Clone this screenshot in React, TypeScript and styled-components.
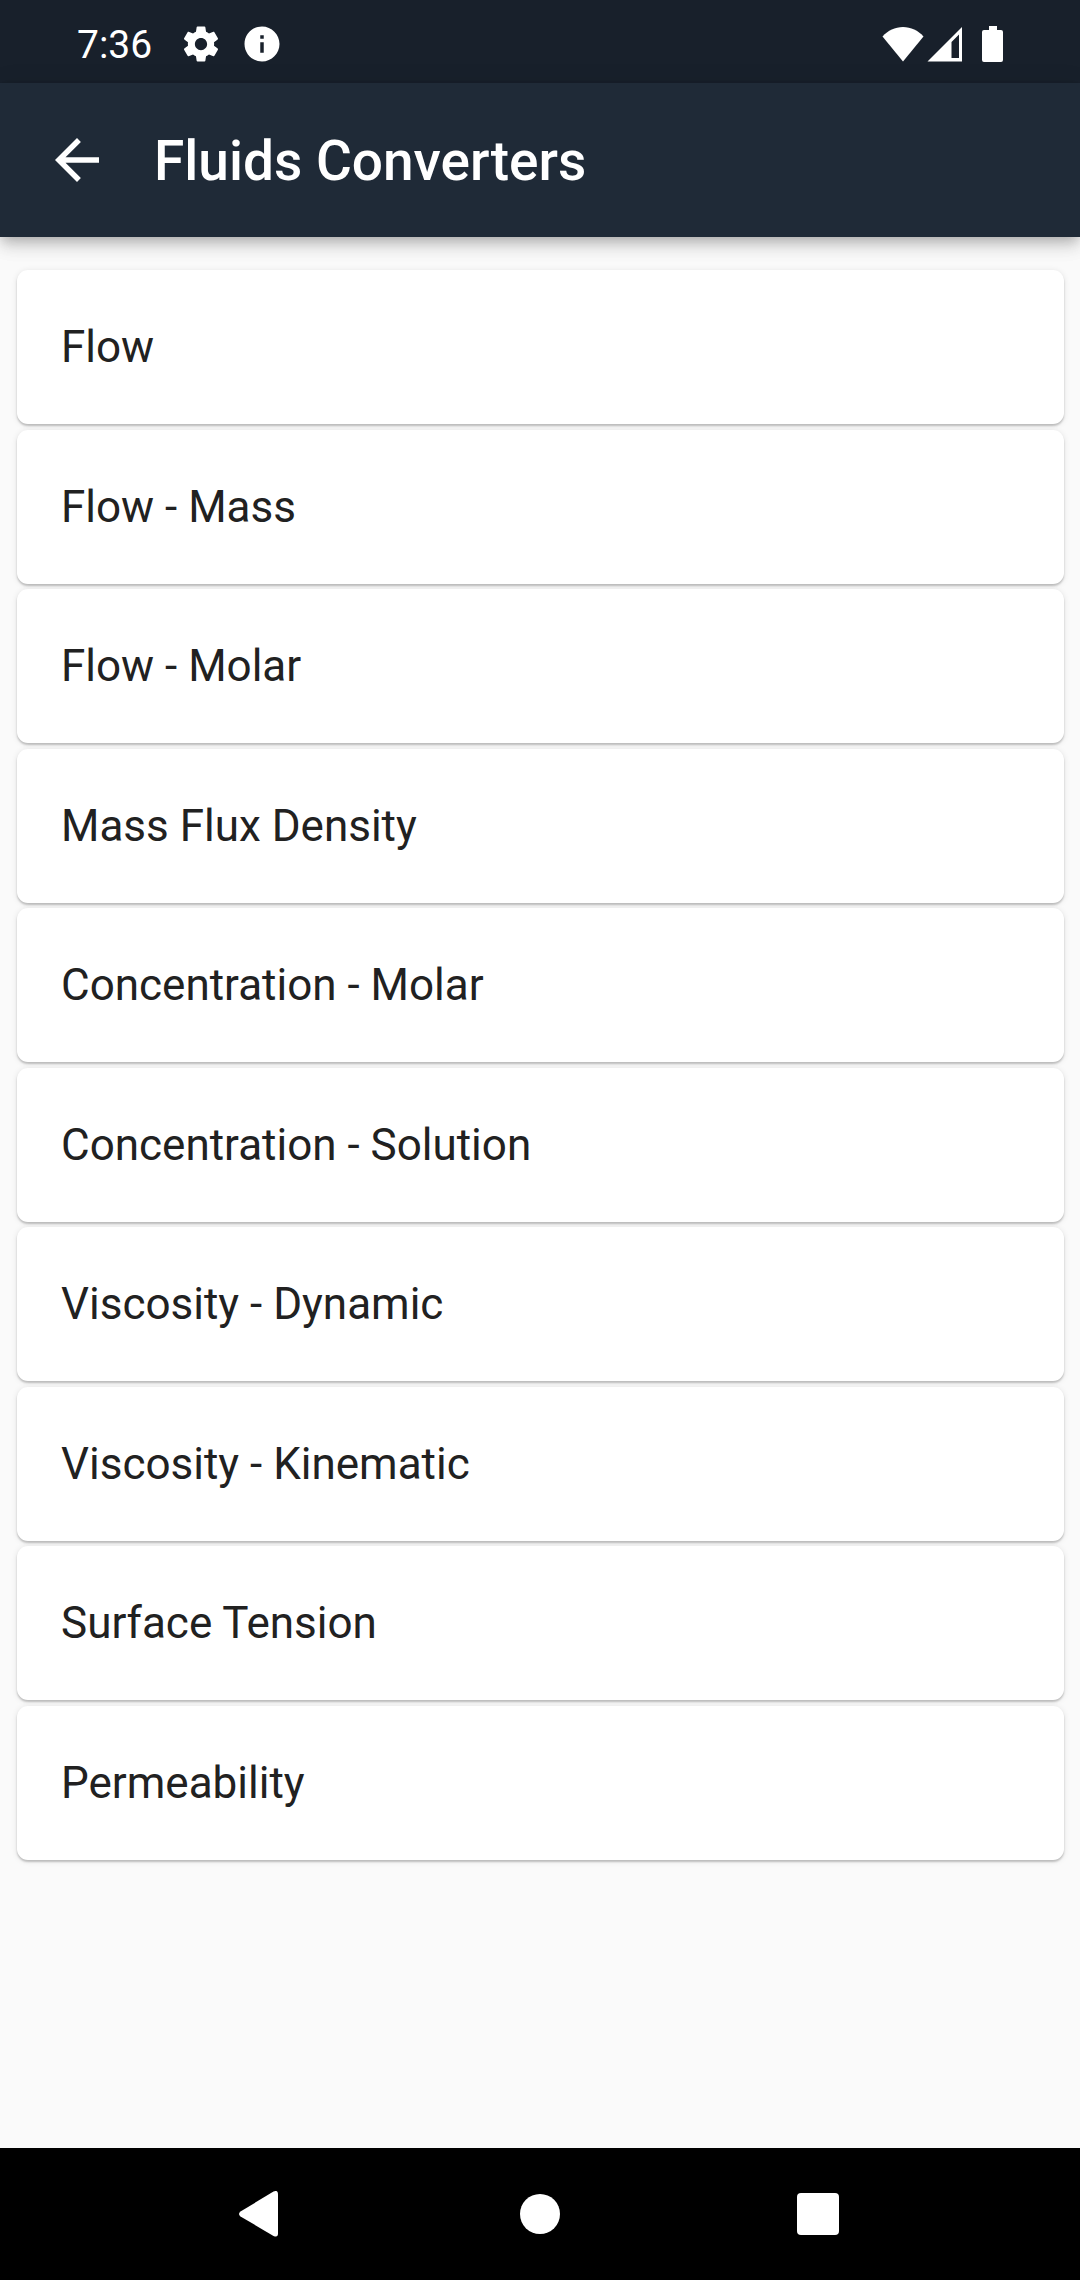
import React from "react";
import styled, { createGlobalStyle } from "styled-components";

const GlobalStyle = createGlobalStyle`
  * {
    box-sizing: border-box;
  }
  body {
    margin: 0;
    background: #fafafa;
    font-family: Roboto, "Noto Sans", sans-serif;
  }
`;

const Screen = styled.div`
  display: flex;
  flex-direction: column;
  min-height: 100vh;
  background: #fafafa;
`;

const StatusBar = styled.header`
  display: flex;
  align-items: center;
  justify-content: space-between;
  height: 83px;
  padding: 4px 76px 0 77px;
  background: #18202b;
  color: #fff;
`;

const StatusGroup = styled.div<{ $gap: number }>`
  display: flex;
  align-items: center;
  gap: ${({ $gap }) => $gap}px;
`;

const Clock = styled.time`
  margin-right: 9px;
  padding-top: 2px;
  font-size: 39px;
  line-height: 48px;
`;

const Glyph = styled.svg`
  display: block;
  flex: none;
  fill: currentColor;
`;

const AppBar = styled.div`
  display: flex;
  align-items: center;
  gap: 44px;
  height: 154px;
  padding: 0 44px;
  background: #1f2a37;
  color: #fff;
  box-shadow:
    0 5px 11px -3px rgba(0, 0, 0, 0.2),
    0 11px 14px 0 rgba(0, 0, 0, 0.1),
    0 3px 24px 0 rgba(0, 0, 0, 0.1);
`;

const IconButton = styled.button`
  display: flex;
  align-items: center;
  justify-content: center;
  padding: 0;
  border: 0;
  background: none;
  color: inherit;
  cursor: pointer;
`;

const Title = styled.h1`
  margin: 0;
  padding-top: 2px;
  font-size: 55px;
  font-weight: 500;
  line-height: 64px;
`;

const Content = styled.main`
  flex: 1;
  padding: 33px 16px 44px 17px;
`;

const ConverterList = styled.ul`
  margin: 0;
  padding: 0;
  list-style: none;
`;

const ConverterItem = styled.li`
  margin-bottom: 5px;

  &:nth-child(odd) {
    margin-bottom: 6px;
  }
`;

const ConverterCard = styled.button`
  display: block;
  width: 100%;
  height: 154px;
  padding: 0 44px;
  border: 0;
  border-radius: 11px;
  background: #fff;
  box-shadow:
    0 2px 2px 0 rgba(0, 0, 0, 0.2),
    0 1px 6px 0 rgba(0, 0, 0, 0.1);
  color: #212121;
  font-family: inherit;
  font-size: 44px;
  line-height: 52px;
  text-align: left;
  cursor: pointer;
`;

const NavigationBar = styled.nav`
  display: flex;
  justify-content: center;
  height: 132px;
  background: #000;
  color: #fff;
`;

const NavigationButton = styled(IconButton)`
  width: 278px;
  height: 100%;
`;

const converters = [
  "Flow",
  "Flow - Mass",
  "Flow - Molar",
  "Mass Flux Density",
  "Concentration - Molar",
  "Concentration - Solution",
  "Viscosity - Dynamic",
  "Viscosity - Kinematic",
  "Surface Tension",
  "Permeability",
];

export default function App() {
  return (
    <Screen>
      <GlobalStyle />
      <StatusBar>
        <StatusGroup $gap={19}>
          <Clock>7:36</Clock>
          <Glyph width="42" height="42" viewBox="0 0 24 24" aria-hidden="true">
            <path d="M19.43 12.98c.04-.32.07-.64.07-.98s-.03-.66-.07-.98l2.11-1.65c.19-.15.24-.42.12-.64l-2-3.46c-.12-.22-.39-.3-.61-.22l-2.49 1c-.52-.4-1.08-.73-1.69-.98l-.38-2.65C14.46 2.18 14.25 2 14 2h-4c-.25 0-.46.18-.49.42l-.38 2.65c-.61.25-1.17.59-1.69.98l-2.49-1c-.23-.09-.49 0-.61.22l-2 3.46c-.13.22-.07.49.12.64l2.11 1.65c-.04.32-.07.65-.07.98s.03.66.07.98l-2.11 1.65c-.19.15-.24.42-.12.64l2 3.46c.12.22.39.3.61.22l2.49-1c.52.4 1.08.73 1.69.98l.38 2.65c.03.24.24.42.49.42h4c.25 0 .46-.18.49-.42l.38-2.65c.61-.25 1.17-.59 1.69-.98l2.49 1c.23.09.49 0 .61-.22l2-3.46c.12-.22.07-.49-.12-.64l-2.11-1.65zM12 15.5c-1.93 0-3.5-1.57-3.5-3.5s1.57-3.5 3.5-3.5 3.5 1.57 3.5 3.5-1.57 3.5-3.5 3.5z" />
          </Glyph>
          <Glyph width="42" height="42" viewBox="0 0 24 24" aria-hidden="true">
            <path d="M12 2C6.48 2 2 6.48 2 12s4.48 10 10 10 10-4.48 10-10S17.52 2 12 2zm1 15h-2v-6h2v6zm0-8h-2V7h2v2z" />
          </Glyph>
        </StatusGroup>
        <StatusGroup $gap={3}>
          <Glyph width="42" height="36" viewBox="0 0 42 36" aria-hidden="true">
            <path d="M21 35.500L.5 10.500C6 4.500 13 1 21 1s15 3.500 20.500 9.500z" />
          </Glyph>
          <Glyph width="36" height="36" viewBox="0 0 36 36" aria-hidden="true">
            <path fillRule="evenodd" d="M35 1v34.500H.5zM32 8.500L24.500 16v16H32z" />
          </Glyph>
          <Glyph width="38" height="36" viewBox="0 0 38 36" aria-hidden="true">
            <path d="M23 0h8v4h4a2 2 0 0 1 2 2v28a2 2 0 0 1-2 2H18a2 2 0 0 1-2-2V6a2 2 0 0 1 2-2h5z" />
          </Glyph>
        </StatusGroup>
      </StatusBar>

      <AppBar>
        <IconButton type="button" aria-label="Back">
          <Glyph width="66" height="66" viewBox="0 0 24 24" aria-hidden="true">
            <path d="M20 11H7.830l5.590-5.590L12 4l-8 8 8 8 1.410-1.410L7.830 13H20v-2z" />
          </Glyph>
        </IconButton>
        <Title>Fluids Converters</Title>
      </AppBar>

      <Content>
        <ConverterList>
          {converters.map((name) => (
            <ConverterItem key={name}>
              <ConverterCard type="button">{name}</ConverterCard>
            </ConverterItem>
          ))}
        </ConverterList>
      </Content>

      <NavigationBar aria-label="System navigation">
        <NavigationButton type="button" aria-label="Back">
          <Glyph width="46" height="46" viewBox="0 0 46 46" aria-hidden="true">
            <path d="M34.500 .6Q39 -1.500 39 3.500V42.500Q39 47 34.500 44.900L1.500 25.500Q-1.500 23 1.500 20.500z" />
          </Glyph>
        </NavigationButton>
        <NavigationButton type="button" aria-label="Home">
          <Glyph width="40" height="40" viewBox="0 0 40 40" aria-hidden="true">
            <circle cx="20" cy="20" r="20" />
          </Glyph>
        </NavigationButton>
        <NavigationButton type="button" aria-label="Recent apps">
          <Glyph width="42" height="42" viewBox="0 0 42 42" aria-hidden="true">
            <rect width="42" height="42" rx="4" />
          </Glyph>
        </NavigationButton>
      </NavigationBar>
    </Screen>
  );
}
